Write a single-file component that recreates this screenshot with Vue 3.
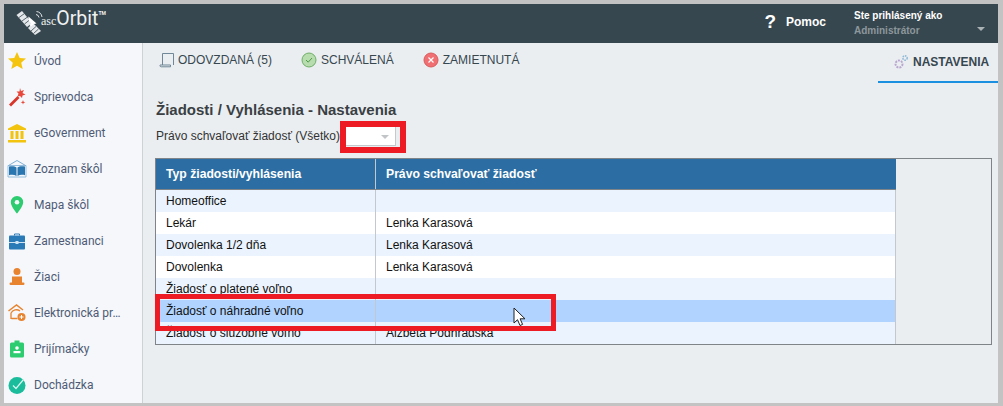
<script setup>
const navItems = [
  { label: 'Úvod', icon: 'star' },
  { label: 'Sprievodca', icon: 'wand' },
  { label: 'eGovernment', icon: 'bank' },
  { label: 'Zoznam škôl', icon: 'book' },
  { label: 'Mapa škôl', icon: 'pin' },
  { label: 'Zamestnanci', icon: 'case' },
  { label: 'Žiaci', icon: 'pupil' },
  { label: 'Elektronická pr…', icon: 'school' },
  { label: 'Prijímačky', icon: 'badge' },
  { label: 'Dochádzka', icon: 'check' }
]

const rows = [
  { type: 'Homeoffice', who: '' },
  { type: 'Lekár', who: 'Lenka Karasová' },
  { type: 'Dovolenka 1/2 dňa', who: 'Lenka Karasová' },
  { type: 'Dovolenka', who: 'Lenka Karasová' },
  { type: 'Žiadosť o platené voľno', who: '' },
  { type: 'Žiadosť o náhradné voľno', who: '', hover: true },
  { type: 'Žiadosť o služobné voľno', who: 'Alžbeta Podhradská' }
]
</script>

<template>
  <div class="page">
    <header class="topbar">
      <div class="logo">
        <svg class="sat" width="30" height="26" viewBox="0 0 30 26">
          <path d="M1.500 5 7 1l10 12-5 4z" fill="#e4e8ea" />
          <path d="M13 18l5-5 8 8-6 4z" fill="#e4e8ea" />
          <path d="M4 7.500 9.500 3.500M7 11l5.500-4M9.500 14l5-4M16 21l5-4.500M18.500 23.500l5-4.500" stroke="#37474f" stroke-width=".8" />
          <path d="M13.500 6.500a6 6 0 0 0 8 7z" fill="#fff" />
          <path d="M17 12l-2.500 3 1.500 1.500 3-2.500z" fill="#fff" />
          <path d="M21 4.500a3.500 3.500 0 0 1 3 3M21.500 1.500a6.500 6.500 0 0 1 5.500 5.500" fill="none" stroke="#dfe4e6" stroke-width="1" />
        </svg>
        <span class="logo-asc">asc</span><span class="logo-orbit">Orbit</span><span class="logo-tm">TM</span>
      </div>
      <div class="help"><span class="help-mark">?</span><span>Pomoc</span></div>
      <div class="user">
        <div class="user-top">Ste prihlásený ako</div>
        <div class="user-name">Administrátor</div>
      </div>
      <span class="user-caret"></span>
    </header>

    <div class="body">
      <nav class="sidebar">
        <div v-for="item in navItems" :key="item.label" class="nav-item">
          <svg class="nav-icon" width="20" height="20" viewBox="0 0 20 20">
            <path v-if="item.icon === 'star'" d="M10 1l2.700 6 6.300.6-4.800 4.200 1.500 6.300L10 14.800 4.300 18.100l1.500-6.300L1 7.600 7.300 7z" fill="#f5c40f" />
            <g v-else-if="item.icon === 'wand'">
              <path d="M2 17.500l8.500-8.500 2 2-8.500 8.500z" fill="#d9362b" />
              <path d="M13 1l1 3 3-1-1.500 3 3 1.500-3 1-.5 2.500-2-2-2.500.5 1-3-2-2 3 0z" fill="#e8483c" />
              <path d="M16 13l.6 1.700 1.700.6-1.700.6-.6 1.700-.6-1.700-1.700-.6 1.700-.6z" fill="#e8483c" />
            </g>
            <g v-else-if="item.icon === 'bank'" fill="#f2c40f">
              <path d="M10 1l9 4.500v1.500H1V5.500z" />
              <rect x="3.500" y="8" width="3" height="8" />
              <rect x="8.500" y="8" width="3" height="8" />
              <rect x="13.500" y="8" width="3" height="8" />
              <rect x="1" y="17" width="18" height="2.500" />
            </g>
            <g v-else-if="item.icon === 'book'">
              <path d="M1.500 6.500 10 1.500l8.500 5" fill="none" stroke="#7fb0d6" stroke-width="1" />
              <path d="M1 6.500h18v11.500H1z" fill="none" stroke="#7fb0d6" stroke-width=".8" />
              <path d="M2 7.500c3-.6 6-.4 7.500 1v8.500c-2-1.200-4.500-1.400-7.500-.8z" fill="#2a76b0" />
              <path d="M18 7.500c-3-.6-6-.4-7.500 1v8.500c2-1.200 4.500-1.400 7.500-.8z" fill="#2a76b0" />
            </g>
            <g v-else-if="item.icon === 'pin'">
              <path d="M10 1a6.200 6.200 0 0 0-6.200 6.200C3.800 11.500 10 18.500 10 18.500s6.200-7 6.200-11.300A6.200 6.200 0 0 0 10 1z" fill="#2ecc71" />
              <circle cx="10" cy="7.200" r="2.300" fill="#f5f7fa" />
            </g>
            <g v-else-if="item.icon === 'case'">
              <path d="M7.500 4.500V3h5v1.500" fill="none" stroke="#2a7ab8" stroke-width="1" />
              <rect x="2" y="4.500" width="16" height="14" rx="1" fill="#2a7ab8" />
              <rect x="2" y="11" width="16" height="1" fill="#cfe3f2" />
              <rect x="8.500" y="10" width="3" height="3" fill="#cfe3f2" />
            </g>
            <g v-else-if="item.icon === 'pupil'" fill="#e8832f">
              <circle cx="10" cy="4.500" r="3.500" />
              <path d="M5 9.500h10v7H5z" />
              <rect x="2.500" y="15.500" width="15" height="2.500" rx="1.200" />
            </g>
            <g v-else-if="item.icon === 'school'">
              <path d="M1.500 8 9.500 2l6.500 5" fill="none" stroke="#e8832f" stroke-width="1.500" />
              <path d="M4 10v6M4 10a6 6 0 0 1 9-2M4.500 15.500h6" fill="none" stroke="#e8832f" stroke-width="1.300" />
              <circle cx="14.500" cy="14" r="4" fill="#e8832f" />
              <path d="M14.500 12v4M12.500 14h4" stroke="#fff" stroke-width="1" />
            </g>
            <g v-else-if="item.icon === 'badge'">
              <rect x="3" y="3.500" width="14" height="15" rx="1.500" fill="#2ecc71" />
              <rect x="7.500" y="1.500" width="5" height="3" fill="#2ecc71" />
              <circle cx="10" cy="9" r="1.800" fill="#fff" />
              <rect x="6.500" y="12" width="7" height="2.200" fill="#fff" />
            </g>
            <g v-else>
              <circle cx="10" cy="10.500" r="8.500" fill="#1abc9c" />
              <path d="M6 10.500l3 3 7.500-9" fill="none" stroke="#d8f5ee" stroke-width="1.200" />
            </g>
          </svg>
          <span>{{ item.label }}</span>
        </div>
      </nav>

      <main class="content">
        <div class="tabs">
          <div class="tab">
            <svg width="16" height="16" viewBox="0 0 16 16">
              <path d="M3.500 13V1.500h11V13M1 13h10.500v1.800H2.200A1.200 1.200 0 0 1 1 13.500z" fill="none" stroke="#6f8797" stroke-width="1" />
            </svg>
            <span>ODOVZDANÁ (5)</span>
          </div>
          <div class="tab">
            <svg width="16" height="16" viewBox="0 0 16 16">
              <circle cx="8" cy="8" r="7" fill="#b7dcae" stroke="#6fae68" />
              <path d="M5 8l2.200 2.200L11 6" fill="none" stroke="#4f9a48" stroke-width="1" />
            </svg>
            <span>SCHVÁLENÁ</span>
          </div>
          <div class="tab">
            <svg width="16" height="16" viewBox="0 0 16 16">
              <circle cx="8" cy="8" r="7" fill="#ef6f72" stroke="#d95b5e" />
              <path d="M5.500 5.500l5 5M10.500 5.500l-5 5" stroke="#fff" stroke-width="1.200" />
            </svg>
            <span>ZAMIETNUTÁ</span>
          </div>
          <div class="tab tab-active">
            <svg width="16" height="16" viewBox="0 0 16 16">
              <circle cx="6" cy="10" r="3.500" fill="none" stroke="#b9a6d0" stroke-width="2" stroke-dasharray="2 1" />
              <circle cx="12" cy="4" r="2.200" fill="none" stroke="#8fb8d6" stroke-width="1.500" stroke-dasharray="1.500 .8" />
            </svg>
            <span>NASTAVENIA</span>
          </div>
        </div>

        <div class="panel">
          <h1 class="title">Žiadosti / Vyhlásenia - Nastavenia</h1>
          <div class="filter">
            <span>Právo schvaľovať žiadosť (Všetko)</span>
            <span class="select"><i class="select-caret"></i></span>
          </div>

          <div class="grid-box">
            <table class="grid">
              <thead>
                <tr>
                  <th class="col-type">Typ žiadosti/vyhlásenia</th>
                  <th class="col-who">Právo schvaľovať žiadosť</th>
                </tr>
              </thead>
              <tbody>
                <tr v-for="row in rows" :key="row.type" :class="{ hover: row.hover }">
                  <td>{{ row.type }}</td>
                  <td>{{ row.who }}</td>
                </tr>
              </tbody>
            </table>
          </div>
        </div>
      </main>
    </div>

    <div class="mark mark-select"></div>
    <div class="mark mark-row"></div>
    <svg class="cursor" width="14" height="20" viewBox="0 0 14 20">
      <path d="M1 1v15l3.500-3.300 2.500 5.800 2.600-1.100-2.500-5.600H12z" fill="#fff" stroke="#222" stroke-width="1" />
    </svg>
  </div>
</template>

<style>
html, body {
  margin: 0;
  overflow: hidden;
}
</style>

<style scoped>
.page {
  position: relative;
  box-sizing: border-box;
  width: 1003px;
  height: 406px;
  padding: 4px 5px 3px 4px;
  background: #c3c3c3;
  font-family: "Liberation Sans", Arial, sans-serif;
  font-size: 12px;
  overflow: hidden;
}

.topbar {
  display: flex;
  align-items: center;
  height: 39px;
  background: #37474f;
  color: #fff;
}

.logo {
  display: flex;
  align-items: baseline;
  margin: -4px 0 0 11px;
  color: #eef1f2;
  font-family: Roboto, sans-serif;
}

.sat {
  align-self: center;
  margin: 3px -4px 0 0;
}

.logo-asc {
  font-size: 12px;
  font-family: "Liberation Serif", serif;
}

.logo-orbit {
  font-size: 19.5px;
  line-height: 24px;
}

.logo-tm {
  align-self: flex-start;
  font-size: 5px;
  font-weight: 700;
  margin-top: 3px;
}

.help {
  display: flex;
  align-items: center;
  gap: 10px;
  margin-left: auto;
  margin-top: -3px;
  font-size: 12px;
  font-weight: 700;
}

.help-mark {
  font-size: 19px;
  line-height: 20px;
}

.user {
  width: 123px;
  margin-left: 28px;
  margin-top: -2px;
  line-height: 15px;
}

.user-top {
  font-size: 10px;
  font-weight: 700;
}

.user-name {
  font-size: 10px;
  font-weight: 700;
  color: #8d979c;
}

.user-caret {
  margin: 11px 13px 0 0;
  border: 4px solid transparent;
  border-bottom: 0;
  border-top-color: #aab2b6;
}

.body {
  display: flex;
  height: 360px;
}

.sidebar {
  box-sizing: border-box;
  flex: none;
  width: 139px;
  border-right: 1px solid #cfd2d5;
  background: #f5f7fa;
  color: #4f5b76;
  font-family: Roboto, sans-serif;
  overflow: hidden;
}

.nav-item {
  display: flex;
  align-items: center;
  gap: 7px;
  height: 36px;
  padding-left: 3px;
  white-space: nowrap;
}

.nav-icon {
  flex: none;
}

.content {
  flex: 1;
  min-width: 0;
  background: #eaeef1;
}

.tabs {
  display: flex;
  align-items: flex-start;
  height: 40px;
  padding-left: 16px;
  color: #37474f;
}

.tab {
  display: flex;
  align-items: center;
  gap: 4px;
  height: 34px;
  margin-right: 29px;
}

.tab:first-child {
  gap: 3px;
}

.tab-active {
  box-sizing: border-box;
  width: 120px;
  height: 40px;
  margin: 0 0 0 auto;
  padding: 0 0 0 15px;
  border-bottom: 2px solid #1b8fe0;
  font-weight: 700;
}

.panel {
  padding: 18px 6px 0 13px;
}

.title {
  margin: 0;
  font-size: 15px;
  line-height: 18px;
  font-weight: 700;
  color: #3a3f44;
}

.filter {
  display: flex;
  align-items: center;
  gap: 5px;
  margin-top: 7px;
  color: #333;
}

.select {
  position: relative;
  box-sizing: border-box;
  display: block;
  width: 51px;
  height: 20px;
  border: 1px solid #c5c9cc;
  background: #fff;
}

.select-caret {
  position: absolute;
  right: 6px;
  top: 8px;
  border: 4px solid transparent;
  border-bottom: 0;
  border-top-color: #c2c5c8;
}

.grid-box {
  box-sizing: border-box;
  height: 187px;
  margin: 12px 0 0 -1px;
  border: 1px solid #7f8488;
}

.grid {
  width: 740px;
  table-layout: fixed;
  border-collapse: collapse;
  color: #111;
}

.grid th {
  height: 30px;
  padding: 0 0 0 10px;
  background: #2c6ea3;
  border-bottom: 1px solid #7f8488;
  color: #fff;
  font-size: 12.2px;
  font-weight: 700;
  text-align: left;
}

.col-type {
  width: 209px;
}

.grid th + th,
.grid td + td {
  border-left: 1px solid #c3c8cc;
}

.grid td {
  height: 22px;
  padding: 0 0 0 10px;
  background: #fff;
  border-right: 1px solid #c3c8cc;
  white-space: nowrap;
}

.grid tbody tr:nth-child(odd) td {
  background: #ebf4fe;
}

.grid tbody tr.hover td {
  background: #b0d3ff;
}

.mark {
  position: absolute;
  box-sizing: border-box;
  border: 5px solid #ed1c24;
}

.mark-select {
  left: 340px;
  top: 121px;
  width: 66px;
  height: 32px;
  border-width: 6px;
}

.mark-row {
  left: 155px;
  top: 294px;
  width: 401px;
  height: 37px;
}

.cursor {
  position: absolute;
  left: 513px;
  top: 307px;
}
</style>
